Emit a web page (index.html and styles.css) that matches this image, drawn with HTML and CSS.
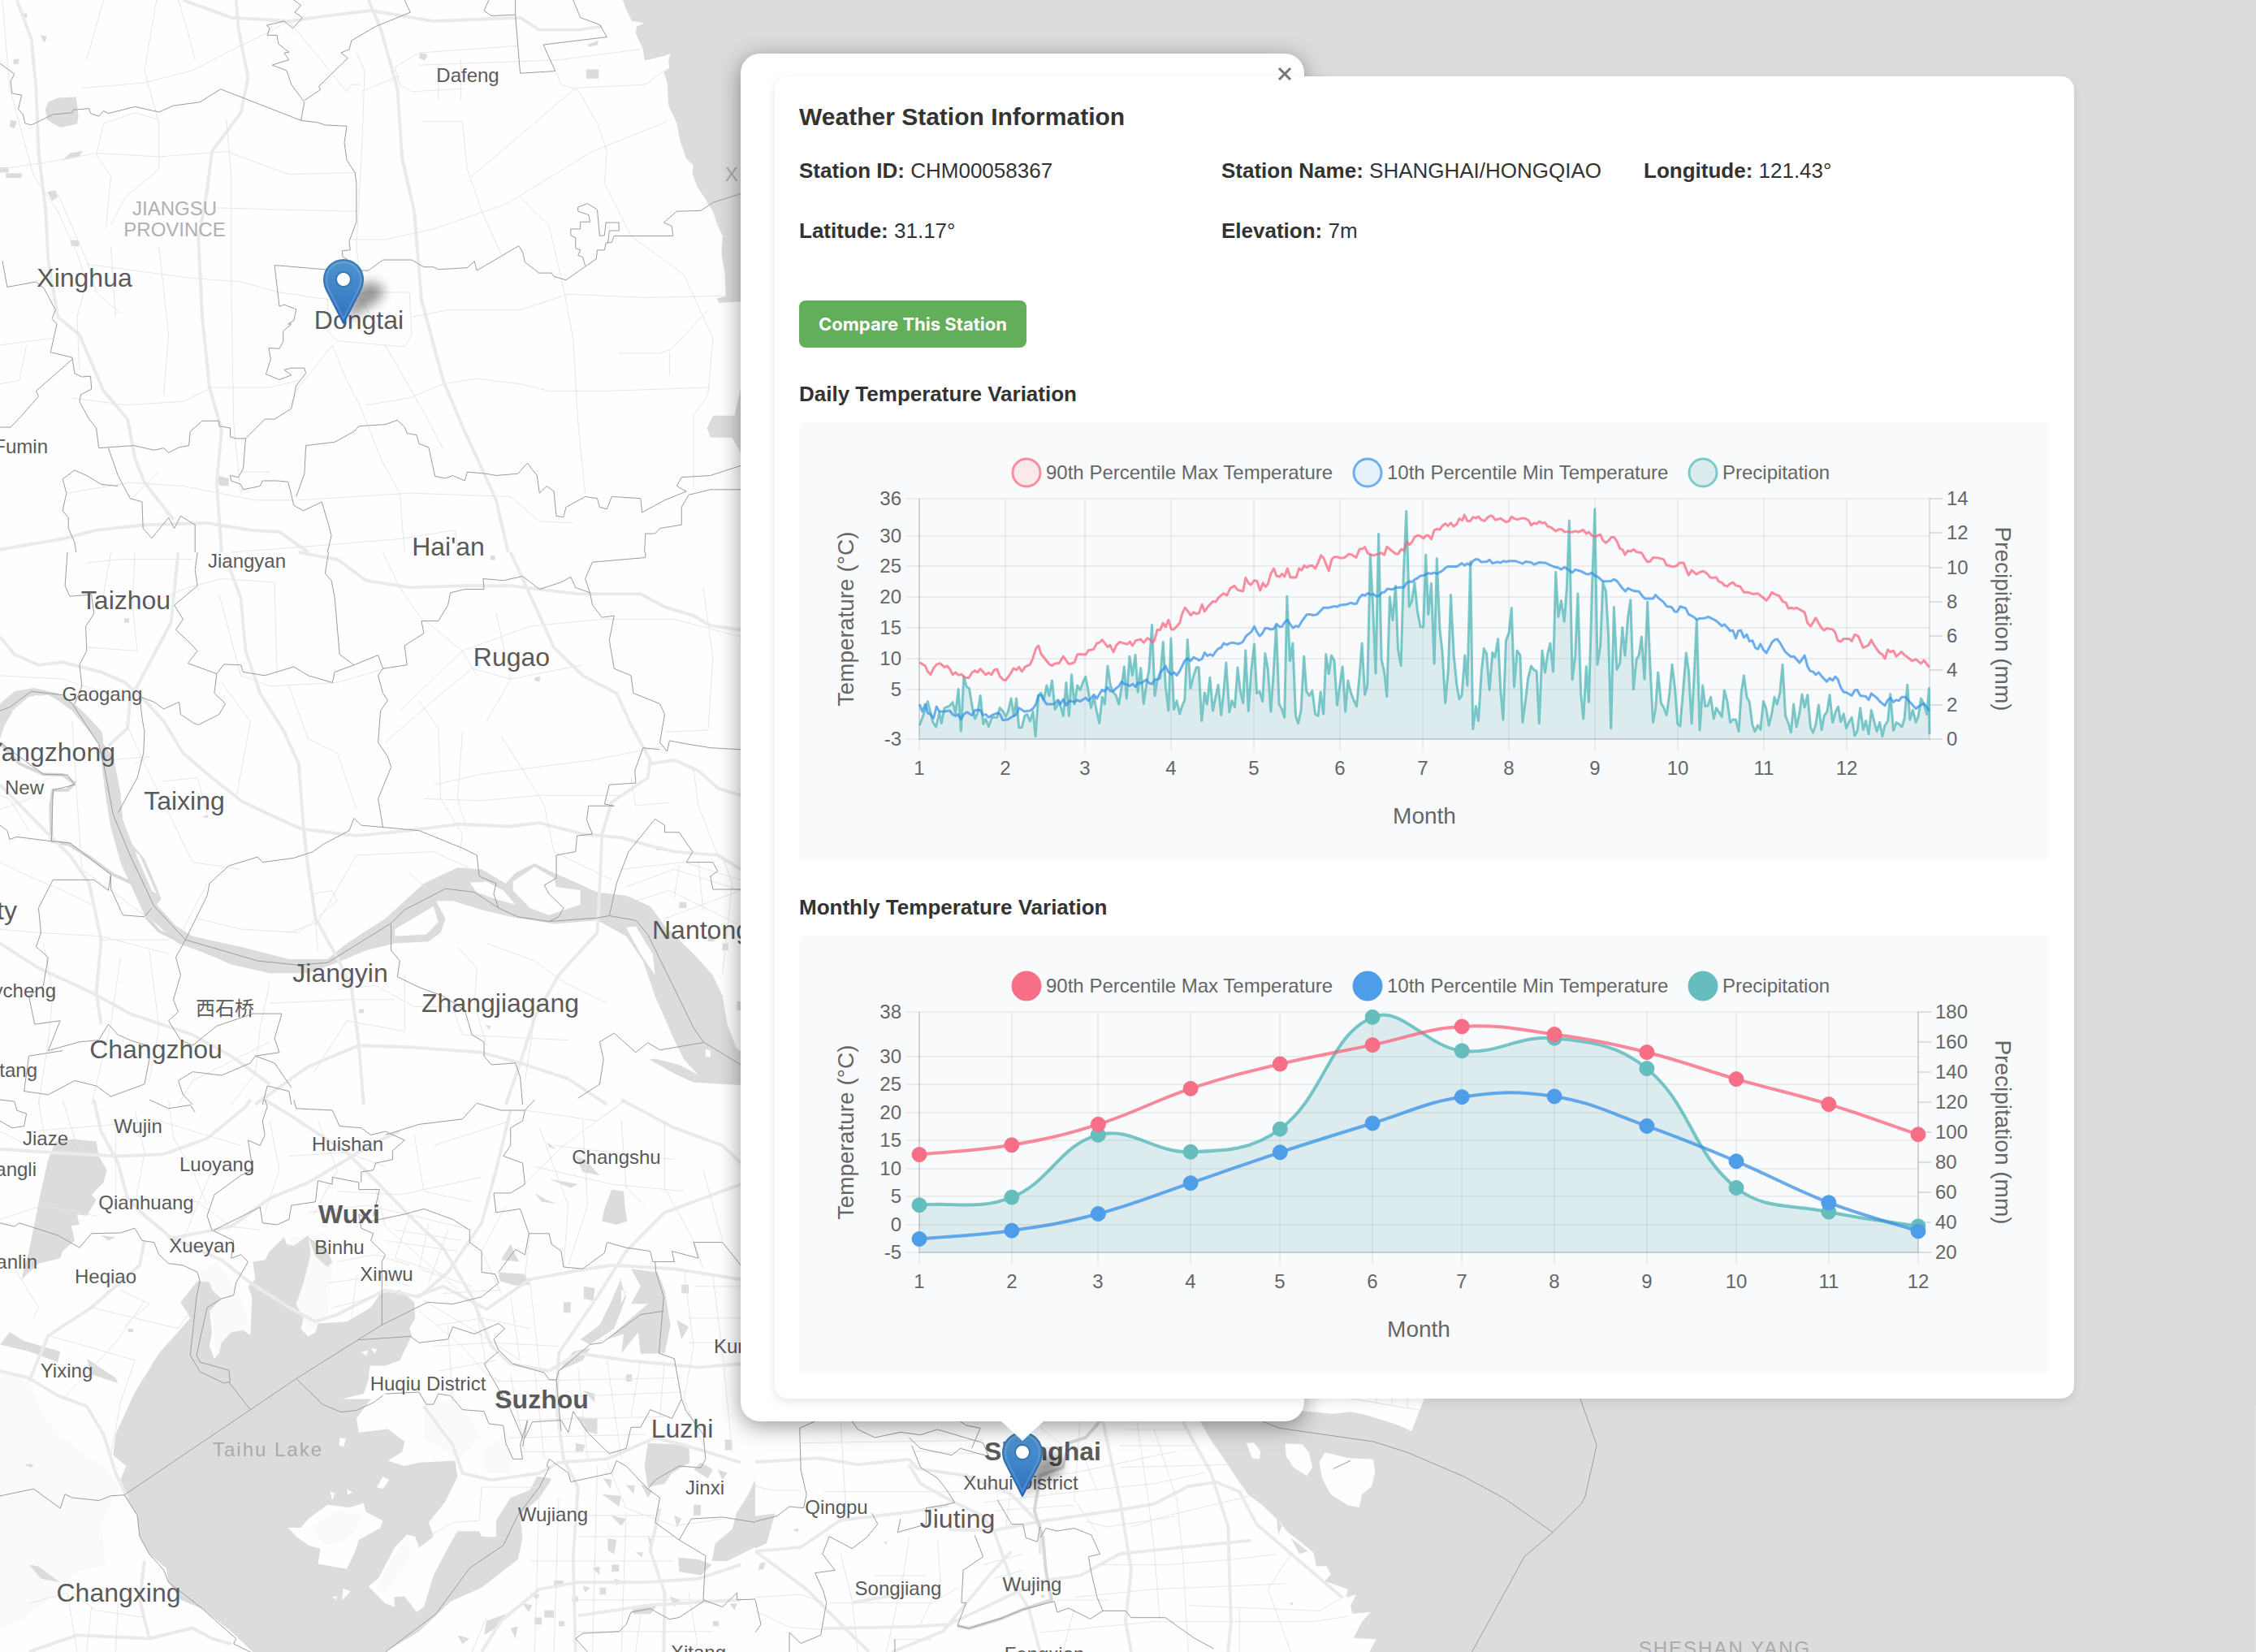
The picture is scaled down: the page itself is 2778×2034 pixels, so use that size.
FILE: index.html
```html
<!DOCTYPE html>
<html lang="en">
<head>
<meta charset="utf-8">
<title>Weather Stations</title>
<link rel="stylesheet" href="styles.css">
</head>
<body>
<main class="map">
  <svg class="basemap" viewBox="0 0 2778 2034" preserveAspectRatio="xMinYMin slice" aria-label="Map of the Yangtze delta">
    <defs>
      <linearGradient id="pinFill" x1="0" y1="0" x2="0" y2="1">
        <stop offset="0" stop-color="#4f94cc"/><stop offset="1" stop-color="#2f72c6"/>
      </linearGradient>
      <linearGradient id="pinEdge" x1="0" y1="0" x2="0" y2="1">
        <stop offset="0" stop-color="#3a7db0"/><stop offset="1" stop-color="#2c66b4"/>
      </linearGradient>
      <filter id="soft" x="-60%" y="-60%" width="220%" height="220%"><feGaussianBlur stdDeviation="7"/></filter>
      <g id="pin">
        <path d="M2 -2L44 -28Q56 -44 40 -50Q22 -54 12 -36Z" fill="#000" opacity=".4" filter="url(#soft)"/>
        <path d="M0 0L-20 -39Q-24 -46 -24 -54A24 24 0 0 1 24 -54Q24 -46 20 -39Z" fill="url(#pinFill)" stroke="url(#pinEdge)" stroke-width="2" stroke-linejoin="round"/>
        <path d="M0 -6L-17 -39Q-21 -46 -21 -54A21 21 0 0 1 21 -54Q21 -46 17 -39Z" fill="none" stroke="#fff" stroke-opacity=".14" stroke-width="2"/>
        <circle cy="-54" r="9" fill="#fff" stroke="#3577b3" stroke-width="2"/>
      </g>
    </defs>

    <!-- Sea -->
    <rect class="water" x="1520" y="0" width="1258" height="1730"/>
    <rect class="water" x="905" y="0" width="700" height="371"/>

    <!-- Northern sheet -->
    <g transform="scale(.593112 .433673)">
      <path class="water" d="M1293 0L1298 20 1312 60 1338 66 1322 75 1320 95 1335 140 1338 172 1375 160 1392 152 1388 172 1390 192 1378 205 1385 235 1388 300 1405 350 1412 400 1425 450 1440 470 1437 490 1447 530 1462 560 1480 600 1490 640 1500 670 1498 720 1505 780 1507 840 1488 848 1492 860 1538 856V0Z"/>
      <path class="water" d="M1538 1100L1525 1180 1480 1180 1468 1215 1475 1242 1520 1243 1538 1285ZM100 290L120 278 158 275 163 330 160 352 125 362 98 340 94 310ZM98 545L115 540 120 560 108 570ZM145 435L172 428 165 445 130 455ZM1217 197H1243V223H1217ZM1222 125L1243 115 1240 128 1220 133ZM872 150L888 155 882 172 870 165ZM22 340L35 345 30 365 20 360ZM146 682L164 682 164 700 148 698ZM84 100L98 104 92 122ZM0 475H18V490H0ZM12 492H45V505H12ZM28 168L40 168 38 182 28 182ZM45 38H56V50H45ZM452 1350L475 1358 475 1380 455 1378Z"/>
      <g class="road road--major">
        <path d="M35 0L65 110 75 250 80 430 95 600 100 740 120 900 165 950 215 1110 265 1190 280 1300 300 1370 360 1475"/>
        <path d="M490 0L495 80 515 220 500 320 440 430 430 540 412 680 420 900 435 1100 460 1220 450 1370 460 1568"/>
        <path d="M765 0L790 80 825 250 835 450 860 600 875 850 920 1080 960 1210 1000 1330 1030 1420 1055 1568"/>
        <path d="M380 0L480 50 600 60 680 45 770 30 900 60 1080 50 1120 85 1200 85 1250 75"/>
        <path d="M0 1560L130 1530 200 1505 300 1490 430 1485 520 1505 580 1510 640 1568"/>
      </g>
      <g class="road">
        <path d="M5 0L20 250 40 350 70 500 120 600 160 720 180 800 160 900 165 1050M120 550L180 740 200 830 250 890M325 0L300 200 330 350 330 480 260 560 230 640M170 250L300 235 400 200 470 150 560 90 600 60M0 480L100 460 200 435 330 445 470 430 600 495 740 490M470 340L480 500 480 800 485 1200 500 1400M450 590L580 595 740 600"/>
        <path d="M740 150L757 200 752 400 740 700 745 760M820 190L870 150 1075 130M820 190L830 240 855 260 960 252M870 185L1160 170 1330 140M1195 250L1340 240 1385 195M1195 250L980 500M730 680L800 680 900 650 1050 580 1230 430 1385 345M1155 205L1165 240 1200 255 1240 350 1260 430 1255 520 1310 670 1420 780 1480 960 1470 1120 1440 1180 1440 1380"/>
        <path d="M960 345L970 480 1000 600 1040 720M1080 560L1140 640 1170 820 1190 960 1200 1200 1215 1400M855 900L930 880 1080 880 1180 835 1340 845 1500 840M760 1150L850 1130 920 1090 990 1075 1080 1090 1140 1110 1260 1110 1475 1100M690 980L720 1080 750 1160 790 1300 830 1400 840 1568M690 980L620 1100 600 1160M800 980L880 1170 920 1275M1470 880L1395 990 1370 1003 1285 1003M1390 1000V1065"/>
        <path d="M680 850L760 830 850 830 855 950 840 985 700 968 680 940ZM740 830L790 940M0 980L110 960M0 1090L40 1080 55 980M150 1130L260 1150 380 1140 440 1100 560 1100 620 1080M560 1340L500 1340M620 1420L850 1400 1060 1410 1120 1480 1190 1485M480 1568L700 1545 830 1530 945 1505 950 1568M910 180V285M957 170V283M270 1420L330 1340M140 1400L270 1370 380 1380 530 1420 610 1420M180 750L400 790 500 800 580 830 680 850M875 345H960M370 0L390 90 405 170M215 0L180 170"/>
        <path d="M330 340L280 320 215 350 200 440 230 500 220 650M240 900L230 700M340 1120L350 950 330 700M750 260L830 215M600 60L720 260 730 240 750 240"/>
      </g>
      <g class="border">
        <path d="M0 180L15 195 30 210 22 230 25 265 45 270 38 310 48 325 52 350 65 355 110 325 150 320 152 312 185 308 188 322 205 330 215 315 225 322 280 303 330 318 360 300 415 290 458 253 625 342 660 348 675 355 720 358 715 405 720 455 737 490 740 520 740 630 725 685 727 710 710 712 712 730 720 735"/>
        <path d="M625 342L632 290 605 240 595 200 565 185 580 178 600 170 590 150 600 148 578 125 575 100 555 100 560 80 553 72 590 60 608 80 628 50 612 35 625 15 610 0M632 285L665 255 662 245 722 165 708 150 725 140 730 115 780 75 852 35 840 0"/>
        <path d="M1015 0L1005 30 1020 45 1070 42 1080 208 1153 202 1128 127 1260 105 1245 70 1205 50 1190 0M1070 0V42"/>
        <path d="M1538 550L1480 575 1455 598 1405 600 1378 632 1395 642 1397 670 1275 670 1270 688 1258 690 1255 710 1240 710 1238 735 1175 795 1150 785 1145 775 1118 775 1110 765 1090 745 1085 715 1077 698 990 768 985 742 970 760 910 765 900 758 880 758 855 738 795 738 765 768 700 768 570 753 580 870 590 865 615 878 610 910 598 920 605 920 588 940 588 970 580 990 558 988 562 1020 552 1062 580 1078 605 1065 590 1050 605 1045 632 1045 635 1060 615 1095 605 1160 570 1190 550 1190 510 1245 490 1245 478 1240 478 1215 455 1210 455 1195 420 1195 395 1225 392 1265 372 1270 350 1285 340 1272 320 1278 278 1265 205 1272 200 1215 185 1190 165 1140 168 1120 190 1105 188 1068 170 1070 155 1060 150 1015 105 1000 118 920 108 905 115 880 92 820 75 800 15 815 5 740"/>
        <path d="M1215 755L1210 730 1200 725 1205 710 1195 705 1195 675 1185 668V650H1205V630H1225L1222 610 1200 600V588L1220 578 1240 595 1245 670 1255 668 1258 632H1285V655H1265L1262 690"/>
        <path d="M510 1245L505 1330 495 1355 478 1350 480 1365 500 1375 505 1390 540 1380 545 1365 575 1365 598 1368 605 1405 610 1435 630 1450 668 1425 680 1480 688 1520 680 1568M615 1410L632 1345 635 1265 695 1255 735 1225 745 1210 800 1205 825 1193 840 1212 845 1230 865 1235 870 1260 890 1270 903 1352 925 1358 940 1350 965 1365 970 1340 1010 1345 1030 1350 1075 1345 1095 1315 1115 1350 1120 1400 1135 1380 1150 1395 1155 1465 1170 1468 1175 1440 1215 1410 1240 1415 1245 1440 1260 1445 1270 1410 1330 1415 1333 1455 1380 1420 1425 1395 1405 1380 1415 1355 1475 1350 1538 1322M1538 1390L1475 1390 1430 1405 1415 1440 1415 1490 1370 1500 1360 1515 1340 1515 1338 1568"/>
        <path d="M150 1020L75 1110 80 1125 45 1180 22 1213 0 1213M225 1272L245 1350 270 1415 295 1425 297 1500 315 1528 350 1470 362 1500 375 1465 405 1490 405 1568M245 1380L210 1375 180 1350 155 1335 130 1360 138 1400 130 1450 142 1470 142 1500 155 1540 158 1568"/>
      </g>
    </g>

    <!-- Yangtze sheet -->
    <g transform="translate(0 680) scale(.593112 .433673)">
      <path class="water" d="M0 430L30 395 70 385 120 400 155 430 185 470 212 510 215 545 235 580 250 680 255 760 275 830 300 870 325 950 335 985 325 1000 365 1060 400 1090 500 1120 600 1155 680 1155 720 1110 800 1040 880 940 950 895 1000 900 1050 940 1070 910 1110 883 1150 910 1200 940 1240 965 1300 975 1350 1005 1380 1060 1440 1140 1480 1200 1500 1260 1510 1340 1530 1410 1568 1440V1515L1440 1505 1400 1480 1348 1440 1360 1438 1410 1455 1450 1484 1420 1440 1395 1370 1360 1260 1335 1160 1300 1090 1240 1045 1150 1055 1060 1035 1000 1015 940 990 905 990 925 1040 915 1080 890 1105 820 1110 760 1130 700 1165 640 1195 560 1195 480 1170 420 1135 370 1110 320 1050 300 1030 270 940 250 880 230 780 220 700 210 590 205 545 180 500 150 450 120 420 100 405 60 410 30 445 10 490 0 530Z"/>
      <path class="land" d="M975 938L1010 935 1045 960 1070 1000 1030 985 990 965ZM1065 935L1110 893 1150 925 1155 950 1205 960 1205 1000 1140 1030 1100 1010 1065 960ZM25 450L75 405 105 415 60 440 30 470ZM1300 1065L1320 1062 1355 1140 1360 1200 1330 1140ZM820 1070L900 1005 910 1050 885 1085 820 1090ZM280 850L290 860 325 970 315 960ZM1465 1410L1475 1415 1475 1435 1465 1430Z"/>
      <path class="channel" d="M0 540L40 600 90 630 130 632 155 655 140 675 110 675 105 720 107 820 145 830 190 870 235 915 275 940M303 1035L330 1075 375 1105"/>
      <path class="water" d="M1110 355L1122 352 1120 368 1110 365ZM1410 993H1425V1010H1410ZM1470 1090H1483V1105H1470ZM1500 1110H1512V1130H1500ZM1362 836H1376V846H1362ZM1008 1342L1020 1345 1015 1355ZM745 1297H755V1308H745ZM1018 10H1028V22H1018ZM258 188H268V200H258ZM1530 1275H1538V1300H1530ZM420 750L433 745 430 755Z"/>
      <g class="road road--major">
        <path d="M0 240L30 290 80 320 130 312 210 340 260 370 300 420 340 480 380 570 440 640 500 705 560 745 625 785 740 805 850 790 950 772 1060 778 1120 768 1210 800 1290 810 1340 830 1400 850 1490 860 1538 900"/>
        <path d="M370 0L355 200 300 340 270 420 265 500 225 550M470 20L500 130 510 280 540 400 590 510 620 600 630 780 640 900 655 1040 700 1150 730 1240 745 1400 755 1568"/>
        <path d="M620 0L700 20 760 80 850 100 960 95 1060 95 1200 118 1330 118 1380 155 1440 180 1475 208 1538 220M1060 0L1100 120 1150 270 1210 350 1280 400 1310 490 1350 590 1345 640 1270 710 1250 800 1245 950 1240 1080 1160 1200 1110 1320 1080 1450 1050 1568"/>
        <path d="M1350 600L1400 590 1450 620 1490 670 1538 690M0 660L100 800 145 860 185 940 210 1100 200 1250 210 1340M0 1110L80 1180 190 1250 270 1310 400 1370 480 1430 560 1510M745 1400L850 1405 1000 1420 1080 1450 1180 1495 1260 1568M530 1568L640 1460 745 1400"/>
      </g>
      <g class="road">
        <path d="M180 30L250 20 400 20M230 0L215 120M280 0L275 150 285 280 180 270M300 150L390 100 460 75 570 85 575 350M0 350L130 360 220 400 300 420M455 120L500 350 560 380 700 370 800 330M600 380L640 530 700 570 740 730M490 700L520 480 460 370M795 0L830 100 870 180 960 280 990 350M830 450L960 280 1100 210 1250 190 1400 190 1538 240M800 540L900 420 980 330 1060 360 1210 320M1030 170L1060 360 1010 480"/>
        <path d="M870 420L910 500 915 700 960 800 955 850M960 510L950 700 970 790M1040 520L1100 650 1130 720 1150 850M880 700L1000 705 1120 690 1290 690M1380 550L1230 590 1000 630 900 660M1380 510L1470 505 1480 300 1460 100M150 480L160 700 170 900 220 950 330 1060M260 480L300 600 350 740 400 880 500 900M340 650L410 640 430 740M280 600L310 580 225 590"/>
        <path d="M430 940L380 1070M600 1080L660 1050 740 860 900 850 980 900M410 1040L500 1070 620 1080 700 990 690 960 650 970 660 1130M0 880L60 920 130 960 190 1000M0 1070L80 1080 210 1090 350 1140M90 1110L110 1250 100 1390 80 1568M210 1100L350 1100M250 1150L230 1340 190 1568M310 1130L330 1350 310 1500M560 1220L540 1350 530 1480 480 1568M560 1280L730 1270 820 1270M700 1240L780 1230 860 1290 940 1290 960 1370 1180 1385M650 1480L720 1330 840 1360 840 1200"/>
        <path d="M950 1120L990 1180 985 1280 1010 1400M1010 1110L1110 1160 1170 1220 1260 1280M1110 1320L1090 1500M1290 900L1420 880 1538 930M1300 950L1400 900 1538 960M1320 990L1390 960 1538 1060M1400 980L1410 890M1450 880L1460 1020M1380 1040L1538 960M1440 620L1450 720 1490 860M1500 860L1520 940 1500 1200M1310 640L1320 720 1390 710M850 910L890 960M1150 850L1270 930M0 730L60 700 100 640M60 790L20 700 0 690M370 1568L400 1500 560 1390"/>
      </g>
      <g class="border">
        <path d="M140 0L135 95 145 125 190 120 195 175 178 210 180 280 165 320 170 380 155 430M410 0L405 50 410 95 362 150 380 190 365 220 385 245 410 280 390 315 450 345 465 318 500 320 505 340 550 350 610 325 640 350 690 370 695 340 735 320 785 292 795 330M735 320L705 290 695 130 688 80 675 60 682 0M450 345L445 400 468 430 455 460 412 490 402 485 375 460 372 425 340 445 320 425 290 410 295 470 300 510 298 570 285 640 245 740"/>
        <path d="M795 330L845 320 840 265 880 230 875 195 910 195 930 150 935 115 965 105 1005 105 1003 75 1045 80 1085 68 1120 105 1165 85 1185 70 1195 100 1225 115 1230 150 1250 185 1275 180 1265 250 1275 330 1310 350 1315 400 1370 430 1380 460 1370 540 1385 565 1390 535 1430 545 1475 555 1538 560M1225 115L1215 75 1230 28 1340 15V0"/>
        <path d="M795 330L785 350 795 400 805 420 790 450 785 540 805 580 812 610 785 700 795 780M1370 560L1335 555 1318 620 1320 655 1265 660 1255 715 1275 720 1222 720 1218 760 1230 800 1198 805 1195 850 1155 860V925L1130 945 1140 970 1170 1010 1160 1035 1140 1048"/>
        <path d="M235 745L270 860 320 1005 385 1100 535 1160 620 1172 680 1165 810 1055 840 1015 925 955 985 965 1035 1010 1075 1035 1140 1048 1240 1038 1265 1032 1320 1045 1345 1085 1440 1350 1460 1390 1538 1455M0 450L20 440 65 395 130 405 150 430 205 545 215 600 235 745M385 1100L430 975 435 940 475 890 535 865 545 880 610 868 650 850 670 830 725 790 735 755 750 775 870 790 960 840 990 860 995 920 1030 940 1025 970 1035 1010"/>
        <path d="M0 775L15 790 20 815 35 808 105 820M0 540L90 630 140 632 155 660 110 675 107 820 145 825 230 915 230 955 255 1030 300 1035 315 1010M230 915L225 960 195 930 110 930 80 1010 85 1080 75 1120 100 1150 90 1230 60 1260 72 1340 125 1330 100 1415 165 1390 205 1385 225 1340 245 1370 270 1385 305 1400 310 1440 300 1510 230 1545 200 1515 155 1500 100 1540 50 1530 60 1430 130 1415M385 1100L365 1150 375 1200 360 1270 370 1305 350 1330 375 1385 400 1400 450 1345 525 1310 585 1310 570 1380 580 1420 530 1430 520 1450 460 1485 400 1475 370 1500 380 1540 400 1568"/>
        <path d="M812 1055V1130L830 1160 825 1205 870 1235 920 1260 965 1300 980 1370 1005 1390 1005 1430 1020 1455 1070 1450 1080 1490 1085 1568M1265 1032L1280 940 1305 850 1360 757 1380 775 1380 795 1410 795 1438 850 1425 880 1480 880 1490 905 1475 920 1480 957H1538M1460 1392L1370 1413 1345 1392 1320 1420 1275 1365 1245 1390 1253 1440 1245 1510 1200 1550M545 1568L555 1515 600 1530 605 1568M530 1430L570 1450 605 1520"/>
      </g>
    </g>

    <!-- Taihu sheet -->
    <g transform="translate(0 1354) scale(.593112 .433673)">
      <path class="hill" d="M0 770L60 800 90 900 130 960 180 1010 215 1040 250 1100 210 1200 220 1320 160 1340 100 1420 40 1480 0 1500ZM410 500L450 460 500 560 520 650 450 740 440 620ZM600 390L680 380 690 470 680 620 640 660 620 570ZM880 850L960 870 1000 960 950 1020 880 960ZM1000 1000L1060 940 1060 1060 1010 1060Z"/>
      <path class="water" d="M410 515L435 518 440 540 460 565 435 600 440 660 435 700 445 735 455 720 460 690 480 660 505 655 520 668 523 560 515 530 530 510 525 460 550 455 560 430 590 390 595 410 610 415 640 385 645 440 630 520 615 580 630 620 625 650 640 672 655 660 660 635 720 630 770 590 790 550 830 540 860 575 862 620 850 650 855 670 830 740 800 755 768 755 765 795 755 835 710 850 770 850 740 905 745 945 805 935 840 970 835 1000 805 1025 840 1040 870 1030 945 1025 950 1070 925 1140 890 1200 900 1240 870 1272 862 1240 845 1235 820 1270 785 1360 765 1382 800 1430 820 1440 818 1412 840 1410 865 1455 880 1440 900 1350 935 1260 950 1225 995 1225 1000 1240 1030 1242 1030 1195 1060 1130 1100 1108 1115 1070 1145 1075 1140 1090 1120 1130 1080 1180 1085 1245 1075 1305 1000 1385 935 1425 870 1510 800 1568H525L480 1510 420 1445 375 1420 350 1370 345 1330 310 1290 290 1240 285 1180 258 1120 250 1080 262 1040 235 1010 240 950 280 830 330 720 395 620 375 575Z"/>
      <path class="water" d="M115 120L150 112 200 118 205 160 222 200 215 235 190 270 200 285 180 330 160 325 165 355 148 358 155 400 130 430 125 450 80 465 45 510 48 490 60 430 85 260 100 170ZM20 660L50 685 125 715 120 745 60 715 0 695ZM180 735L240 790 245 805 190 780ZM60 1320L80 1325 125 1370 85 1360ZM640 390L680 430 690 460 680 475 655 445ZM1270 255L1295 260 1298 310 1302 345 1280 355 1250 345 1255 310ZM1060 410L1070 440 1078 460 1040 455ZM1035 490L1090 495 1100 525 1070 528 1038 515ZM1195 160L1215 170 1245 215 1210 205ZM1290 505L1270 570 1245 640 1205 680 1225 695 1275 650 1300 560 1290 520ZM1310 480L1365 490 1380 540 1392 640 1380 720 1330 722 1325 660 1290 720 1295 665 1260 680 1310 620 1345 580 1310 580 1330 530ZM1212 530L1235 535 1232 570 1212 565ZM1405 625L1430 645 1415 680ZM1225 705L1210 740 1160 770 1190 715ZM1200 900L1240 905 1240 950 1215 940ZM1210 825L1235 835 1235 860ZM1345 975L1430 980 1432 1030 1395 1060 1380 1090 1345 1100 1338 1040ZM1195 975L1215 980 1210 1000 1195 998ZM1120 1070L1140 1075 1135 1090ZM1568 1080L1550 1130 1530 1170 1520 1220 1485 1260 1478 1310 1510 1310 1568 1270ZM1408 1300L1450 1305 1478 1320 1455 1350 1410 1340ZM1330 1090L1355 1110 1345 1130ZM1455 1030L1480 1050 1470 1075 1440 1050ZM1268 1180L1300 1190 1290 1210ZM1250 1120L1290 1125 1285 1155ZM1252 1075L1270 1078 1268 1105ZM1300 1095L1318 1095 1316 1120ZM1262 1245L1280 1250 1275 1290 1262 1280ZM1320 1285L1335 1285 1333 1300ZM1230 1330L1245 1325 1245 1350ZM1270 1320H1285V1340H1270ZM1345 1240L1355 1250 1350 1270ZM1390 1410L1412 1420 1400 1440ZM1310 1440L1365 1435 1350 1460 1315 1460ZM1150 1365H1170V1380H1150ZM1100 1400L1120 1405 1115 1420ZM1085 1430L1105 1435 1098 1455ZM1010 1480L1050 1460 1040 1490 1005 1520ZM1060 1500L1075 1495 1070 1530ZM1110 1470H1125V1490H1110ZM1130 1450H1150V1470H1130ZM1440 1150H1455V1180H1440ZM1400 1180L1415 1190 1405 1215ZM1505 965H1520V995H1505ZM1490 1050L1510 1060 1500 1080ZM950 1520L975 1530 960 1545ZM1300 780H1312V800H1300ZM266 650H276V660H266ZM210 385L240 390 225 400ZM50 1035L70 1035 65 1045ZM1135 120L1155 140 1140 135ZM1140 225L1200 240 1185 250ZM1110 265L1135 285 1155 295 1125 290ZM1210 1380L1225 1385 1215 1400ZM1245 1385H1258V1405H1245ZM1275 1360L1290 1365 1280 1380ZM1188 1410H1200V1425H1188ZM1160 1480H1172V1495H1160ZM1515 1430L1530 1430 1525 1450ZM1480 1480H1492V1495H1480ZM1170 575H1185V605H1170ZM1415 525H1430V550H1415ZM1290 540L1300 545 1290 580Z"/>
      <path class="land" d="M598 1215L625 1215 640 1190 680 1150 725 1158 755 1145 760 1170 795 1195 790 1215 745 1250 735 1290 720 1332 660 1318 665 1275 640 1265 615 1240ZM705 960L718 962 714 985 704 982ZM795 1070L808 1080 795 1105 782 1100ZM685 1112L695 1118 690 1138ZM712 1388L728 1395 710 1422ZM750 715L765 712 760 728ZM770 705L782 708 778 722ZM720 1105L732 1115 722 1122ZM690 1412L700 1410 698 1420Z"/>
      <path class="hill" d="M650 1210L700 1165 750 1180 740 1220 700 1265 670 1260ZM820 1290L850 1240 850 1300 800 1400 780 1390Z"/>
      <g class="road road--major">
        <path d="M195 0L210 90 245 180 265 280 300 330 345 380 360 400M0 140L110 150 240 160 340 155 430 110 510 20 520 0M350 395L480 360 560 280 640 235 720 170 780 120 830 90M550 0L620 60 720 150 780 230 850 330 920 420 980 560 1020 700 1060 750 1140 770M360 395L460 455 520 520 600 590 655 630 700 610 800 540 870 560"/>
        <path d="M860 560L920 530 1010 595 1100 510 1200 485 1270 470 1400 480 1538 510M1060 30L1030 200 1000 350 930 490 870 560M1290 0L1400 80 1500 130 1538 180M1538 240L1380 320 1300 430 1240 560 1160 720 1155 870 1170 1020 1200 1100 1190 1300 1195 1568M880 870L940 980 960 1060 1020 1080 1120 1060 1160 1030 1260 1020 1360 960 1420 980 1538 1030"/>
        <path d="M300 400L290 470 190 590 100 670 60 800M0 770L60 790 120 840 180 870 215 950 240 1060 265 1130M60 1568L160 1520 310 1530 400 1500 440 1530 480 1545M310 1530L290 1420 300 1310M1538 750L1450 760 1300 740 1200 720 1140 770M1000 1568L1040 1480 1120 1390 1200 1370 1340 1370 1450 1360 1538 1320M1370 1160L1350 1280 1380 1400 1378 1568M1200 1465L1350 1435 1538 1420"/>
      </g>
      <g class="road">
        <path d="M80 0L90 90M130 0L150 90 170 160M240 90V300M280 30L300 150 280 300 340 370M350 0L360 110 400 200 430 300M60 90L330 60 500 130M0 340L90 300 200 330M30 480L80 590 70 620M100 670L180 700 280 740M190 590L370 650 390 610M250 540L310 580 260 640M300 570L240 690 130 850M280 740L250 860 230 1010M320 280L410 290 480 360 540 370M380 400L400 330 440 200"/>
        <path d="M560 60L580 200 550 320M600 160L720 150 800 190M660 60L700 200 650 330M700 260L830 270 1000 220M640 320L760 300 860 330 980 370M780 250L800 360 900 480 950 540M820 370L960 400M800 400L950 430M850 330L820 450 930 500M890 350L870 480 980 530M930 370L890 520M700 460L780 440 850 470M680 520L790 500 850 530M690 590L780 560M740 500L730 620M870 600L960 700 1010 780 1040 800"/>
        <path d="M880 570L990 660 1080 740M910 640L1000 620 1100 650M900 700L1020 690 1160 700M910 770L1030 740M930 640L940 860M990 600L1010 760M1060 560L1080 740M1100 510L1120 760M1030 800L1400 790M1040 850L1420 830M1070 910L1380 900M1060 960L1340 950M1080 1000L1300 1000M1060 780L1090 1000M1110 770L1130 1020M1200 760L1220 1020M1260 740L1290 1020M1330 740L1310 900M1380 740L1370 900M1420 480L1440 700 1420 850 1460 980M1480 500L1500 720 1520 1000M1440 530H1538M1430 620H1538M1430 690H1538"/>
        <path d="M1090 30L1240 60 1300 0M1080 250L1170 130 1300 0M1120 80L1180 300 1170 470M1210 60L1220 300 1180 470M1290 60L1300 250 1340 300M1110 190L1270 240 1420 260M1150 130L1400 170M1380 60L1380 250 1440 400 1460 480M1460 200L1500 400M900 130L1060 60M860 100L880 260 980 290M890 1240L940 1200 995 1195 1000 1100 1120 1100M1120 1100L1110 1568M1160 1130L1150 1568M1240 1040L1230 1568M1300 1170L1290 1568M1200 1180H1360M1200 1240H1400M1100 1310H1400M1200 1420H1460M1200 1510H1480M1330 1460L1320 1568M1430 1400L1450 1568M1260 1030L1300 1160 1400 1210 1500 1190"/>
        <path d="M150 1400L200 1450 300 1470M180 1568L190 1440M240 1568L245 1430M60 1430L140 1400 160 1568M980 1568L1010 1470M0 90L60 130M1050 300L1000 430 1040 550M920 550L1040 540M1100 380L1090 500"/>
      </g>
      <g class="border">
        <path d="M0 350L30 360 40 350 120 385 165 420 190 380 250 378 280 365 295 400 320 405 330 440 350 465 380 470 410 490 415 515 408 560 395 725 415 772 465 805 478 800 475 768 415 745 408 725 430 590 460 565 485 555 490 520 515 460 500 440 480 450 485 400 440 370 430 330 445 270 500 215 525 200 515 115 540 130 550 100 545 60 555 20 550 0M445 370L540 305 545 350 575 355 600 340 605 300 655 290 660 230 690 240 690 220 745 235 745 255 788 255 775 330M475 802L520 880M0 0L30 5 35 30 55 40 50 75 25 80 0 60"/>
        <path d="M0 1125L70 1105 100 1135 125 1160 135 1120 150 1130 205 1138 230 1125 258 1122 520 880 615 792 792 640 888 575 940 580 1000 560 1035 520 1028 495 1000 490 1000 430 975 405 975 370 940 340 880 310 840 325 770 345 745 325 750 365 775 380 770 400 800 440 793 460 793 640M258 1122L285 1180 290 1240 310 1290 340 1335 350 1370 420 1445 490 1530 485 1545 520 1568M615 792L670 865 708 887 740 882 775 860 795 840M742 682L852 672 870 690 930 680 940 645 985 665 1035 635 1048 650 1025 680 1035 710 1065 750 1130 775 1140 795 1155 795 1160 770 1225 695 1250 690 1330 610 1378 600M800 835L870 830 885 865 900 865 910 835 935 840 960 880 1005 885 1015 920 1045 925 1050 975 1065 1020 1085 1020 1080 980 1095 910 1085 985M1035 715L1005 750 1060 880 1085 960"/>
        <path d="M610 0L615 25 690 30 705 75 750 80 770 100 800 90 840 115 815 145 815 170 780 180 775 200 750 205 750 235M800 100L870 70 960 55 990 10 1040 30 1090 30 1110 0M1090 30L1085 60 1060 80 1060 130 1045 160 1085 180 1090 240 1060 265 1025 265 1030 320 1080 310 1098 380 1090 440 1070 425 1035 490M1098 380L1140 380 1145 410 1165 430 1170 475 1210 480 1255 435 1260 405 1300 420 1350 430 1355 460 1400 460 1395 430 1450 450 1440 405 1500 405 1538 470M1360 460L1362 490 1378 560 1368 720 1400 735 1415 850 1395 905 1350 880 1330 930 1310 930 1300 990 1265 1005 1220 945 1190 885 1180 945 1165 910 1105 915 1090 960"/>
        <path d="M1155 795L1165 940M1415 850L1425 885 1460 950 1465 1020 1455 1045 1410 1040 1360 1080 1345 1105 1370 1130 1360 1200 1410 1250 1435 1190 1500 1185 1568 1200M1345 1105L1300 1040 1280 1025 1270 1060 1185 1085 1180 1060 1140 1020 1135 1040 1140 1045 1120 1100 1075 1180 1045 1265 975 1330 905 1460 800 1568M1410 1250L1465 1295 1460 1420 1500 1440 1530 1400 1530 1420 1568 1418M1465 1420L1410 1470 1390 1475 1350 1445 1310 1455 1300 1490 1285 1510 1210 1515 1195 1530 1220 1568M310 0L350 25 395 15 405 35"/>
      </g>
    </g>

    <!-- Shanghai sheet -->
    <g transform="translate(930 1680) scale(.701531 .333333)">
      <path class="water" d="M775 190L800 280 820 340 845 420 865 480 890 520 915 570 935 620 960 660 980 695 985 745 1003 745 1010 775 1000 800 1040 830 1038 860 1055 850 1045 890 1048 920 1080 915 1065 950 1050 1010 1090 1015 1078 1062H2634V120H775ZM0 440V560L35 550 20 660 0 680ZM915 570L925 590 918 630ZM940 640L970 690 955 700Z"/>
      <path class="land" d="M960 126H1174L1152 247 1130 225 1100 205 1070 185 1045 175 1015 182 960 172ZM862 290L875 288 887 320 885 350 872 345ZM930 292L960 295 972 325 978 380 968 412 945 380 932 340ZM1000 325L1040 345 1085 350 1088 400 1082 450 1065 480 1060 528 1040 520 1010 480 995 420 990 360Z"/>
      <path class="water" d="M66 610L76 605 75 620ZM8 735L18 730 15 755 5 760ZM225 655L232 655 230 665ZM500 850L510 855 505 865ZM938 880L944 880 942 892Z"/>
      <g class="road road--major">
        <path d="M0 360L50 355 110 345 180 370 270 350 285 385 370 410 450 480 500 590 500 700M0 690L80 675 150 575 270 545 340 520M340 610L420 612 500 580 630 540 700 515 760 450 810 435 850 470 880 590 1030 860M240 1062L330 985 410 780 450 690M120 975L280 968 340 960 400 900 500 800 570 780 640 700 705 685 870 650M170 880L250 850M270 370L290 440 350 510 400 560 420 620 450 800 480 900 500 1062M0 690L90 830 160 980 200 1062M610 210L640 500 660 760 650 950 660 1062M750 210L800 400 830 600 835 950 830 1062"/>
      </g>
      <g class="road">
        <path d="M80 290L400 280M150 210L160 570M0 450L30 465 80 465M120 470L360 470M280 320L400 330 560 300M300 390L420 430 560 400 740 320M400 510L560 470 700 440 790 400M420 540L560 520M500 230L540 300 530 420M570 210L560 500 600 620M670 210L690 500 700 680 710 940M700 240L740 500 750 700 760 1062M650 240L760 240M640 300L770 300M640 380L830 370M880 480L720 560 660 600M610 740L720 740 840 720 915 700M560 860L700 830 930 810M530 870L620 870M500 990L700 950 980 950 1040 930M760 890L990 910 1040 850M850 900L850 1062M940 700L900 830 940 1062M150 700L170 870 180 1062M270 640L260 780 230 1062M320 650L325 800 290 960M210 780L300 780M130 880L310 880 360 820M400 740L470 700M420 790L470 760M0 860L80 850 120 880M0 910L60 970 120 980M240 1015L310 1015M560 900L540 1062M580 580L620 600 740 560M570 300L600 470M450 440L440 600"/>
        <path d="M1045 126L1165 168M1060 126L1062 135M1090 126V145M1118 126V155M1145 126V160"/>
      </g>
      <path class="channel" d="M605 210L580 270 550 290 540 380 500 410 490 540 505 640 510 760 520 870 470 905 430 940 375 975 355 965"/>
      <g class="border">
        <path d="M105 210L78 235 80 390 90 480 85 530 60 525 38 560 0 580M170 210L180 240 210 270 255 250 290 260 320 240 400 290 410 340 360 310 345 335 290 310 270 270M275 300L290 380 320 420 335 460 350 510 330 520 300 530 300 590 250 620 255 570M205 550L215 590 195 640 170 680 130 635 118 700 140 760 105 770 120 840 125 880 115 1000 80 1030 60 990 60 1062M360 210L370 225 395 235 380 310M385 630L400 710 365 760 362 880 370 880 355 965 375 975 435 935 470 905 525 875 530 915 550 900 588 940 610 910 650 910 660 935 720 935 770 1010 805 1050M500 640L510 605 530 615 560 605 590 630 605 700 585 710 590 770 600 860 610 910M425 500L450 590 470 590 475 640 495 655 500 600M0 870L10 960 0 990M245 1062V1015"/>
        <path d="M890 210L920 235 1085 285 1145 325 1245 415 1315 495 1400 620 1350 710 1258 1062M1448 126L1477 298 1457 485 1450 515 1400 620M1015 385L1045 355"/>
      </g>
    </g>

    <g class="place">
      <text x="576" y="101">Dafeng</text>
      <text x="304" y="699">Jiangyan</text>
      <text x="126" y="863">Gaogang</text>
      <text x="30" y="978">New</text>
      <text x="277" y="1250">西石桥</text>
      <text x="56" y="1410">Jiaze</text>
      <text x="170" y="1395">Wujin</text>
      <text x="267" y="1442">Luoyang</text>
      <text x="428" y="1417">Huishan</text>
      <text x="759" y="1433">Changshu</text>
      <text x="180" y="1489">Qianhuang</text>
      <text x="418" y="1544">Binhu</text>
      <text x="249" y="1542">Xueyan</text>
      <text x="130" y="1580">Heqiao</text>
      <text x="476" y="1577">Xinwu</text>
      <text x="82" y="1696">Yixing</text>
      <text x="527" y="1712">Huqiu District</text>
      <text x="868" y="1840">Jinxi</text>
      <text x="681" y="1873">Wujiang</text>
      <text x="1030" y="1864">Qingpu</text>
      <text x="1257" y="1834">Xuhui District</text>
      <text x="1106" y="1964">Songjiang</text>
      <text x="1271" y="1959">Wujing</text>
      <text x="1286" y="2045">Fengxian</text>
      <text x="860" y="2043">Xitang</text>
    </g>
    <g class="place place--cut-left">
      <text x="59" y="558">Fumin</text>
      <text x="69" y="1228">ycheng</text>
      <text x="46" y="1326">tang</text>
      <text x="45" y="1448">angli</text>
      <text x="46" y="1562">anlin</text>
    </g>
    <g class="place place--cut-right"><text x="879" y="1666">Kunshan</text></g>
    <g class="place place--city">
      <text x="104" y="353">Xinghua</text>
      <text x="442" y="405">Dongtai</text>
      <text x="552" y="684">Hai'an</text>
      <text x="155" y="750">Taizhou</text>
      <text x="630" y="820">Rugao</text>
      <text x="227" y="997">Taixing</text>
      <text x="419" y="1209">Jiangyin</text>
      <text x="616" y="1246">Zhangjiagang</text>
      <text x="192" y="1303">Changzhou</text>
      <text x="840" y="1770">Luzhi</text>
      <text x="146" y="1972">Changxing</text>
      <text x="1179" y="1881">Jiuting</text>
    </g>
    <g class="place place--city place--cut-left">
      <text x="142" y="937">Yangzhong</text>
      <text x="21" y="1132">ty</text>
    </g>
    <g class="place place--city place--cut-right"><text x="803" y="1156">Nantong</text></g>
    <g class="place place--metro">
      <text x="430" y="1506">Wuxi</text>
      <text x="667" y="1734">Suzhou</text>
      <text x="1284" y="1798">Shanghai</text>
    </g>
    <g class="place place--region">
      <text x="215" y="265">JIANGSU</text>
      <text x="215" y="291">PROVINCE</text>
    </g>
    <g class="place place--region place--water">
      <text x="330" y="1793">Taihu Lake</text>
      <text x="2124" y="2038">SHESHAN YANG</text>
      <text x="935" y="223">XIANG</text>
    </g>

    <use href="#pin" x="423" y="398"/>
    <use href="#pin" x="1259" y="1842"/>
  </svg>

  <section class="popup" aria-label="Station details">
    <button class="popup__close" type="button" aria-label="Close popup">
      <svg viewBox="0 0 18 18" aria-hidden="true"><path d="M2 2L16 16M16 2L2 16"/></svg>
    </button>
    <article class="card">
      <h2 class="card__title">Weather Station Information</h2>
      <div class="info">
        <p><strong>Station ID:</strong> CHM00058367</p>
        <p><strong>Station Name:</strong> SHANGHAI/HONGQIAO</p>
        <p><strong>Longitude:</strong> 121.43°</p>
        <p><strong>Latitude:</strong> 31.17°</p>
        <p><strong>Elevation:</strong> 7m</p>
      </div>
      <button class="compare" type="button">Compare This Station</button>
      <h3 class="card__subtitle">Daily Temperature Variation</h3>
      <svg class="chart" id="daily" viewBox="0 0 1540 540" role="img" aria-label="Daily temperature and precipitation"></svg>
      <h3 class="card__subtitle">Monthly Temperature Variation</h3>
      <svg class="chart" id="monthly" viewBox="0 0 1540 540" role="img" aria-label="Monthly temperature and precipitation"></svg>
    </article>
  </section>
</main>
<script src="charts.js"></script>
</body>
</html>
```

FILE: styles.css
```css
* { box-sizing: border-box; }

body {
  margin: 0;
  font-family: "Liberation Sans", Arial, "Noto Sans CJK SC", sans-serif;
  font-size: 26px;
  line-height: 36px;
  color: #333;
}

h2, h3, p { margin: 0; }

.map {
  position: relative;
  height: 100vh;
  overflow: hidden;
  background: #fefefe;
}

.basemap { display: block; width: 100%; height: 100%; }
.basemap path { vector-effect: non-scaling-stroke; }

.water { fill: #dcdcdc; }
.land { fill: #fefefe; }
.hill { fill: #fafafa; }
.channel { fill: none; stroke: #d8d8d8; stroke-width: 4px; stroke-linejoin: round; }
.road { fill: none; stroke: #e6e6e6; stroke-width: 1px; stroke-linejoin: round; }
.road--major { stroke: #eaeaea; stroke-width: 4px; }
.border { fill: none; stroke: #9c9c9c; stroke-width: 1px; stroke-linejoin: round; }

.place { font-size: 24px; fill: #5a5a5a; text-anchor: middle; }
.place--city { font-size: 32px; }
.place--metro { font-size: 32px; font-weight: 700; }
.place--region { fill: #b0b0b0; }
.place--water { fill: #aaa; letter-spacing: 2px; }
.place--cut-left { text-anchor: end; }
.place--cut-right { text-anchor: start; }

.popup {
  position: absolute;
  top: 66px;
  left: 912px;
  width: 694px;
  padding: 28px 42px;
  background: #fff;
  border-radius: 24px;
  box-shadow: 0 6px 28px rgba(0, 0, 0, .4);
}

.popup::after {
  content: "";
  position: absolute;
  top: 100%;
  left: 50%;
  width: 52px;
  height: 24px;
  margin-left: -26px;
  background: #fff;
  clip-path: polygon(0 0, 100% 0, 50% 100%);
}

.popup__close {
  position: absolute;
  top: 0;
  right: 0;
  z-index: 1;
  width: 48px;
  height: 48px;
  padding: 16px 15px;
  border: 0;
  background: none;
}

.popup__close svg { display: block; width: 18px; height: 18px; }
.popup__close path { fill: none; stroke: #757575; stroke-width: 3px; }

.card {
  position: relative;
  width: 1600px;
  padding: 30px;
  background: #fff;
  border-radius: 16px;
  box-shadow: 0 4px 12px rgba(0, 0, 0, .1);
}

.card__title { font-size: 30px; line-height: 40px; }

.info {
  display: grid;
  grid-template-columns: repeat(3, 1fr);
  gap: 38px 20px;
  margin: 28px 0 68px;
}

.compare {
  display: block;
  height: 58px;
  padding: 0 24px;
  border: 0;
  border-radius: 8px;
  background: #62ae5b;
  color: #fff;
  font: 700 22px/58px Inter, "Liberation Sans", sans-serif;
}

.card__subtitle { margin: 39px 0 17px; font-size: 26px; }

.chart {
  display: block;
  width: 100%;
  border-radius: 8px;
  background: #f9fafc;
  font-size: 24px;
}

.chart text { fill: #666; }
.axis-title { font-size: 28px; text-anchor: middle; }
.tick--left { text-anchor: end; }
.tick--bottom { text-anchor: middle; }
.grid { fill: none; stroke: rgba(0, 0, 0, .055); stroke-width: 2px; }
.axis { fill: none; stroke: rgba(0, 0, 0, .11); stroke-width: 2px; }

.line { fill: none; stroke-width: 3px; stroke-linejoin: round; opacity: .72; }
.line--smooth { stroke-width: 4px; opacity: .75; }
.max { stroke: #f9617b; }
.min { stroke: #3590e8; }
.rain { stroke: #4cb4b5; }
.area { fill: #3fa0a8; opacity: .16; }

.dot { stroke-width: 1px; }
.dot.max, .key--solid.max { fill: #f66f87; stroke: #f66f87; }
.dot.min, .key--solid.min { fill: #4d9de8; stroke: #4d9de8; }
.dot.rain, .key--solid.rain { fill: #65bdbe; stroke: #65bdbe; }

.key { stroke-width: 3px; }
.key--solid { stroke-width: 1px; }
.key--outline.max { fill: #f9e9ed; stroke: #f98c9f; }
.key--outline.min { fill: #e6f0fa; stroke: #6caeee; }
.key--outline.rain { fill: #dbecef; stroke: #7dc8c9; }
```

FILE: charts.js
```js
const NS = "http://www.w3.org/2000/svg";
const TOP = 94, BOTTOM = 390, LEFT = 148;
const MONTH_START = [0, 31, 60, 91, 121, 152, 182, 213, 244, 274, 305, 335];

function add(parent, tag, attrs, text) {
  const el = document.createElementNS(NS, tag);
  for (const key in attrs) el.setAttribute(key, attrs[key]);
  if (text !== undefined) el.textContent = text;
  parent.appendChild(el);
  return el;
}

const scaleY = (v, lo, hi) => BOTTOM - (v - lo) / (hi - lo) * (BOTTOM - TOP);

function frame(svg, opt) {
  const { right, temp, rain, tempTicks, rainTicks, days, key } = opt;
  const legend = [[280, "max", "90th Percentile Max Temperature"],
    [700, "min", "10th Percentile Min Temperature"], [1113, "rain", "Precipitation"]];
  for (const [x, name, label] of legend) {
    add(svg, "circle", { cx: x, cy: 62, r: key === "solid" ? 18 : 17, class: `key key--${key} ${name}` });
    add(svg, "text", { x: x + 24, y: 70 }, label);
  }
  for (const v of tempTicks) {
    const y = Math.round(scaleY(v, ...temp));
    add(svg, "path", { class: "grid", d: `M${LEFT - 16} ${y}H${right}` });
    add(svg, "text", { class: "tick--left", x: LEFT - 22, y: y + 8 }, v);
  }
  for (const v of rainTicks) {
    const y = Math.round(scaleY(v, ...rain));
    add(svg, "path", { class: "axis", d: `M${right} ${y}H${right + 16}` });
    add(svg, "text", { x: right + 21, y: y + 8 }, v);
  }
  MONTH_START.forEach((d, i) => {
    const x = Math.round(LEFT + d / days * (right - LEFT));
    add(svg, "path", { class: "grid", d: `M${x} ${TOP}V405` });
    add(svg, "text", { class: "tick--bottom", x, y: 434 }, i + 1);
  });
  add(svg, "path", { class: "axis", d: `M${LEFT} ${TOP}V${BOTTOM}H${right}V${TOP}` });
  add(svg, "text", { class: "axis-title", x: (LEFT + right) / 2, y: 494 }, "Month");
  add(svg, "text", { class: "axis-title", transform: "translate(67 242) rotate(-90)" }, "Temperature (°C)");
  add(svg, "text", { class: "axis-title", transform: "translate(1473 242) rotate(90)" }, "Precipitation (mm)");
}

/* Cubic spline whose handles are shared out by distance to the neighbours. */
function spline(pts) {
  const t = 0.4, n = pts.length;
  const handles = pts.map((p, i) => {
    const a = pts[Math.max(i - 1, 0)], b = pts[Math.min(i + 1, n - 1)];
    const d0 = Math.hypot(p[0] - a[0], p[1] - a[1]), d1 = Math.hypot(b[0] - p[0], b[1] - p[1]);
    const f0 = t * d0 / (d0 + d1), f1 = t * d1 / (d0 + d1);
    const dx = b[0] - a[0], dy = b[1] - a[1];
    return [[p[0] - f0 * dx, p[1] - f0 * dy], [p[0] + f1 * dx, p[1] + f1 * dy]];
  });
  let d = `M${pts[0]}`;
  for (let i = 1; i < n; i++) d += `C${handles[i - 1][1]} ${handles[i][0]} ${pts[i]}`;
  return d;
}

/* Daily series: [first half-year, second half-year], each a list of x,y samples. */
const daily = {
  rain: [
    "318,1073 328,1035 338,990 345,1030 350,1060 358,1078 366,1027 371,1065 378,1013 391,1005 398,993 405,1030 412,948 418,1092 425,905 432,940 438,945 446,1015 452,1050 458,1030 465,970 472,1068 478,1050 485,1077 493,1045 505,1045 512,1012 520,1025 526,1042 532,1025 539,980 546,1040 552,980 558,1080 565,1080 572,1040 578,1035 585,1058 592,1025 598,1110 605,970 611,960 618,985 625,935 631,970 638,918 645,1018 655,990 665,1040 672,925 679,1040 685,898 692,1000 699,935 706,950 712,925 719,905 725,950 732,1012 739,975 745,1020 752,1065 759,975 765,1000 772,868 779,935 786,960 792,968 799,1000 806,940 812,870 818,980 825,835 832,900 839,830 845,958 852,875 859,998 866,930 872,880 879,727 886,970 892,915 899,910 906,785 912,940 919,1022 925,773 932,1018 939,988 946,1033 952,1005 958,985 965,777 972,945 979,905 986,873 992,873 999,1057 1006,960 1012,1000 1019,908 1026,1022 1032,980 1039,933 1046,1037 1052,960 1058,857 1066,1027 1072,987 1079,1010 1086,873 1092,950 1099,995 1105,815 1112,1023 1119,880 1126,792 1132,962 1139,955 1146,990 1152,825 1159,880 1166,1025 1172,900 1179,730 1186,1000 1192,1015 1199,1045 1205,628 1212,850 1219,790 1226,1040 1232,1065 1239,1020 1246,835 1252,955 1259,970 1266,953 1273,1033 1280,1040 1286,957 1293,1033 1299,828 1306,895 1312,832 1319,850 1326,1003 1332,940 1339,870 1346,1025 1352,918 1359,960 1366,985 1373,1007 1380,900 1386,790 1393,967 1399,935 1406,485 1412,650 1419,893 1426,413 1433,845 1440,890 1446,973 1453,630 1460,710 1467,592 1473,810 1480,867 1486,560 1493,335 1500,663 1506,645 1513,580 1520,680 1527,733 1534,733",
    "30,485 36,690 43,583 50,860 56,497 63,740 69,820 76,995 83,880 89,623 96,830 103,935 109,982 115,968 122,832 128,935 135,508 141,1085 148,1007 154,1057 161,890 167,808 173,825 180,950 187,822 193,837 200,775 206,945 212,1053 219,780 226,752 232,668 238,940 245,815 252,830 258,1062 265,985 271,910 278,868 285,882 291,885 297,1065 304,815 311,890 317,825 323,790 330,888 336,545 342,698 349,643 356,715 362,600 368,367 375,915 382,830 388,618 395,960 401,1050 408,870 414,992 421,620 428,327 434,863 441,800 447,580 454,610 460,760 466,1083 473,665 480,880 487,858 493,735 499,832 506,700 512,640 519,948 526,845 532,830 538,767 545,913 552,647 558,860 565,1062 571,1015 577,890 584,995 590,1010 597,1037 604,960 610,863 617,950 623,1067 629,1075 636,950 643,823 649,885 656,1066 662,900 668,710 675,1089 682,935 688,1007 694,1005 701,975 708,1050 714,1013 720,1025 727,1043 733,952 740,990 747,1063 753,1053 760,1053 767,1093 773,960 779,901 786,975 792,992 799,1070 805,1094 812,1072 818,1087 825,990 831,1013 838,1073 845,1030 851,975 857,1000 864,960 870,863 877,1040 884,1066 890,1097 896,1000 903,1078 910,1030 916,966 922,1010 929,968 936,1080 942,1098 948,1070 955,1002 962,1088 968,1040 975,1025 981,968 988,1063 995,1025 1001,1008 1007,1060 1014,1033 1020,1082 1027,1060 1033,1045 1040,1108 1046,1093 1053,1013 1060,1087 1066,1057 1073,1102 1079,1020 1086,1060 1092,1093 1099,1062 1105,1110 1111,1073 1118,1057 1124,965 1131,1090 1138,1063 1144,1068 1151,1078 1157,1050 1164,933 1170,1053 1177,1020 1184,1062 1190,1040 1196,980 1203,1000 1210,1035 1215,945 1216,1103"
  ],
  min: [
    "318,1000 325,1025 332,1000 338,1030 345,1035 352,1048 359,1008 366,1025 378,1025 391,1022 398,1035 405,1040 411,1035 418,1052 425,1035 432,1027 445,1038 452,1020 465,1020 471,1037 478,1035 485,1045 497,1035 507,1030 513,1035 519,1055 532,1052 539,1045 552,1035 558,1013 566,1020 572,1025 585,1022 592,1015 599,1000 605,970 612,968 618,985 625,1000 638,1000 645,997 652,985 658,1000 665,983 672,1003 680,988 692,992 699,985 706,990 719,978 726,988 739,967 746,980 759,950 765,955 772,942 779,955 786,955 792,945 799,938 806,922 812,930 819,932 826,937 833,930 839,940 846,925 852,928 866,915 872,927 879,930 886,915 893,915 899,890 906,880 912,868 918,888 926,897 932,890 939,900 946,885 958,850 965,842 972,850 980,838 993,848 1000,843 1006,822 1013,833 1019,828 1026,833 1032,820 1039,808 1046,805 1052,790 1060,795 1066,790 1073,787 1088,792 1098,785 1106,765 1119,750 1126,732 1133,752 1139,765 1146,755 1152,738 1159,738 1166,742 1173,740 1180,723 1187,733 1193,732 1199,718 1206,709 1213,725 1220,737 1226,730 1233,733 1240,715 1253,690 1260,690 1268,693 1278,690 1293,667 1306,667 1320,662 1326,664 1333,658 1346,657 1360,650 1366,654 1373,653 1380,632 1387,622 1393,625 1400,617 1407,622 1413,620 1420,627 1427,627 1434,615 1440,614 1447,602 1460,604 1467,598 1480,597 1487,597 1493,583 1500,577 1507,578 1513,570 1520,565 1527,557 1534,556",
    "36,548 43,550 50,546 56,550 69,540 76,530 82,525 103,525 115,514 121,521 128,515 135,520 141,506 148,500 154,501 161,510 174,508 180,502 187,514 200,509 206,512 213,506 219,509 226,506 240,506 258,515 265,508 278,511 285,518 297,511 311,512 330,525 343,530 349,535 357,527 375,546 382,536 395,541 408,551 414,552 421,546 428,557 434,560 447,576 466,575 473,569 480,575 493,600 500,610 506,600 519,609 532,611 539,625 546,636 565,636 571,623 578,634 590,648 597,662 609,665 616,680 622,681 629,663 642,669 649,690 662,700 668,708 675,704 688,703 695,698 714,712 727,730 733,725 740,735 747,747 753,745 760,773 766,747 772,745 779,770 786,760 792,783 799,780 806,805 812,810 818,792 825,812 832,823 845,787 852,777 858,776 864,788 877,820 890,836 897,835 910,857 922,832 929,870 935,885 942,888 948,898 955,890 962,903 974,922 981,910 988,918 994,905 1000,913 1007,942 1014,958 1020,959 1033,970 1040,952 1046,951 1053,970 1066,973 1073,985 1079,963 1092,978 1099,990 1111,1005 1118,985 1124,978 1131,992 1138,985 1144,988 1151,975 1160,975 1170,993 1184,1015 1190,1008 1203,997 1210,1010 1216,1023"
  ],
  max: [
    "318,855 332,868 338,887 345,897 352,875 360,862 368,859 378,872 385,868 392,880 398,898 405,890 412,899 420,897 428,908 437,909 445,890 452,884 458,890 465,878 478,898 485,891 492,898 498,882 505,879 512,903 520,916 526,917 535,900 545,876 552,882 558,871 565,887 573,871 585,863 592,840 599,808 605,798 612,828 618,838 632,863 638,867 645,860 655,858 665,835 678,861 685,860 692,855 699,828 706,827 719,829 726,814 738,811 746,790 752,787 759,778 772,802 778,796 786,820 793,797 801,785 812,790 820,793 826,784 832,798 840,780 852,776 859,788 868,772 875,777 880,787 885,780 892,743 899,743 906,720 912,733 919,709 926,742 932,742 946,720 952,688 959,667 966,680 973,693 980,683 986,688 993,685 1000,656 1006,680 1014,664 1026,645 1033,647 1040,632 1052,618 1060,624 1068,600 1078,592 1086,606 1099,610 1105,564 1112,582 1118,588 1126,573 1133,576 1140,608 1147,582 1153,595 1159,585 1166,550 1173,532 1180,558 1187,560 1193,550 1199,560 1206,532 1213,563 1220,562 1227,563 1234,532 1240,538 1247,522 1253,528 1260,522 1267,522 1273,532 1280,512 1287,487 1293,495 1300,520 1306,540 1313,500 1320,492 1327,492 1334,496 1341,496 1348,490 1354,482 1361,484 1372,494 1380,465 1387,464 1393,458 1400,480 1413,487 1426,482 1433,478 1440,485 1446,457 1457,470 1467,481 1473,482 1481,465 1488,470 1494,440 1500,450 1507,440 1513,423 1520,418 1527,420 1534,428",
    "31,418 36,418 43,431 50,400 56,396 63,398 69,385 76,377 82,385 89,375 96,387 103,378 109,360 116,366 121,347 128,368 135,368 141,355 148,358 154,353 161,364 168,368 175,357 182,350 187,351 193,364 200,362 206,359 213,366 219,372 226,368 232,354 239,360 246,363 258,358 265,360 272,366 278,383 285,375 291,378 297,370 304,375 311,374 317,387 325,390 336,403 343,397 350,397 357,406 368,405 375,407 381,403 389,406 401,399 408,412 414,406 421,418 428,422 441,415 447,435 454,443 461,435 467,424 473,424 480,438 487,463 494,468 499,485 506,470 513,473 519,466 526,475 538,478 545,495 552,509 558,508 565,494 578,496 590,500 597,520 612,526 620,523 628,512 637,512 643,535 649,555 656,538 668,552 675,545 683,541 692,549 700,563 707,564 714,562 720,577 727,580 733,590 740,593 746,585 753,580 760,590 770,594 779,614 790,614 800,620 812,618 822,630 832,642 838,632 845,614 851,620 862,626 870,645 878,650 884,670 890,667 897,670 903,667 922,683 929,720 936,731 942,718 948,702 955,720 962,737 968,745 974,738 988,742 994,752 1000,780 1007,784 1014,774 1026,774 1033,782 1040,760 1048,765 1060,805 1072,797 1079,778 1085,795 1098,822 1105,828 1111,843 1118,812 1124,820 1131,815 1138,835 1150,819 1157,830 1165,838 1175,850 1184,845 1196,860 1203,848 1210,862 1216,872"
  ]
};

/* Each half-year keeps its own horizontal offset and resolution. */
const HALVES = [{ x0: -14, kx: 1.96 }, { x0: 756, kx: 1.9122 }];
const KY = 2.8;

function dailyPoints(halves) {
  return halves.flatMap((part, h) => part.split(" ").map(pair => {
    const [x, y] = pair.split(",").map(Number);
    return [(HALVES[h].x0 + x / HALVES[h].kx).toFixed(1), (y / KY - 10).toFixed(1)];
  }));
}

const dailySvg = document.getElementById("daily");
frame(dailySvg, {
  right: 1392, days: 365, key: "outline",
  temp: [-3, 36], tempTicks: [36, 30, 25, 20, 15, 10, 5, -3],
  rain: [0, 14], rainTicks: [14, 12, 10, 8, 6, 4, 2, 0]
});
for (const name of ["rain", "min", "max"]) {
  const d = "M" + dailyPoints(daily[name]).join("L");
  if (name === "rain") add(dailySvg, "path", { class: "area", d: `${d}L1392 ${BOTTOM}H${LEFT}Z` });
  add(dailySvg, "path", { class: `line ${name}`, d });
}

const monthly = {
  rain: [51.5, 56.7, 98.2, 86.9, 102.1, 176.6, 154.2, 162.6, 142.4, 63, 47, 37.4],
  min: [-2.6, -1.1, 1.9, 7.4, 12.9, 18.1, 22.8, 22.9, 17.6, 11.3, 3.9, -1.2],
  max: [12.5, 14.2, 17.9, 24.3, 28.7, 32.1, 35.4, 34, 30.8, 26, 21.5, 16.1]
};
const monthlySvg = document.getElementById("monthly");
frame(monthlySvg, {
  right: 1378, days: 335, key: "solid",
  temp: [-5, 38], tempTicks: [38, 30, 25, 20, 15, 10, 5, 0, -5],
  rain: [20, 180], rainTicks: [180, 160, 140, 120, 100, 80, 60, 40, 20]
});
for (const name of ["rain", "min", "max"]) {
  const range = name === "rain" ? [20, 180] : [-5, 38];
  const pts = monthly[name].map((v, i) => [LEFT + MONTH_START[i] / 335 * 1230, scaleY(v, ...range)]);
  const d = spline(pts);
  if (name === "rain") add(monthlySvg, "path", { class: "area", d: `${d}V${BOTTOM}H${LEFT}Z` });
  add(monthlySvg, "path", { class: `line line--smooth ${name}`, d });
  for (const [cx, cy] of pts) add(monthlySvg, "circle", { class: `dot ${name}`, cx, cy, r: 9 });
}
```
